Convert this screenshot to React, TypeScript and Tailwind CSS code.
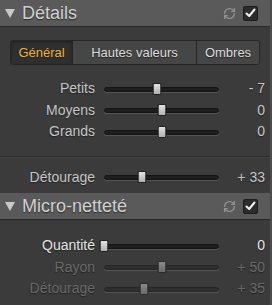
import { RefreshCw } from "lucide-react";

const FONT = { fontFamily: '"Liberation Sans", Arial, sans-serif' };

function Header({ title }: { title: string }) {
  return (
    <div className="flex h-[27px] items-center border-b border-[#262626] bg-[#5a5a5a] pl-[5px] pr-[12px]">
      <span className="mr-[7px] mt-[1px] h-0 w-0 border-x-[5px] border-t-[9px] border-x-transparent border-t-[#c9c9c9]" />
      <span className="text-[18px] leading-none text-[#d2d2d2] [text-shadow:0_1px_1px_#2a2a2a]">{title}</span>
      <div className="ml-auto flex items-center gap-[7px]">
        <RefreshCw className="h-[13px] w-[13px] text-[#909090]" strokeWidth={2.6} />
        <div className="flex h-[15px] w-[15px] items-center justify-center rounded-[2px] border border-[#1c1c1c] bg-[#2c2c2c]">
          <svg width="11" height="10" viewBox="0 0 11 10">
            <path d="M1.5 5.5 L4.2 8 L9.5 1.5" fill="none" stroke="#f2f2f2" strokeWidth="2" strokeLinecap="round" strokeLinejoin="round" />
          </svg>
        </div>
      </div>
    </div>
  );
}

function Slider({
  label,
  value,
  pos,
  disabled,
  bright,
}: {
  label: string;
  value: string;
  pos: number;
  disabled?: boolean;
  bright?: boolean;
}) {
  const text = disabled ? "text-[#6a6a6a]" : bright ? "text-[#e4e4e4]" : "text-[#c6c6c6]";
  return (
    <div className="flex h-[21.5px] items-center">
      <span className={`w-[95px] text-right text-[14px] [text-shadow:0_1px_1px_#222] ${text}`}>{label}</span>
      <div className="relative ml-[9px] h-[12px] w-[115px]">
        <div
          className={`absolute left-0 right-0 top-[4px] h-[5px] rounded-full border ${
            disabled ? "border-[#262626] bg-[#2e2e2e]" : "border-[#141414] bg-[#1e1e1e]"
          } shadow-[0_1px_0_#555]`}
        />
        <div
          className={`absolute top-0 h-[12px] w-[9px] -translate-x-1/2 rounded-[2px] border ${
            disabled
              ? "border-[#2a2a2a] bg-gradient-to-b from-[#8a8a8a] to-[#6a6a6a]"
              : "border-[#1e1e1e] bg-gradient-to-b from-[#e2e2e2] to-[#b0b0b0]"
          }`}
          style={{ left: `${pos}%` }}
        />
      </div>
      <span className={`ml-auto pr-[5px] text-[14px] [text-shadow:0_1px_1px_#222] ${text}`}>{value}</span>
    </div>
  );
}

export default function App() {
  return (
    <div className="h-[305px] w-[272px] overflow-hidden border-r-[2px] border-[#4c4c4c] bg-[#3b3b3b]" style={FONT}>
      <Header title="Détails" />
      <div className="px-[10px] pt-[13px]">
        <div className="flex h-[25px] overflow-hidden rounded-[3px] border border-[#262626] text-[13px] [text-shadow:0_1px_1px_#222]">
          <div className="flex w-[61px] items-center justify-center bg-[#2f2f2f] text-[#f2b32a] shadow-[inset_0_1px_2px_#1e1e1e]">
            Général
          </div>
          <div className="flex w-[124px] items-center justify-center border-l border-[#262626] bg-[#464646] text-[#dcdcdc]">
            Hautes valeurs
          </div>
          <div className="flex flex-1 items-center justify-center border-l border-[#262626] bg-[#464646] text-[#dcdcdc]">
            Ombres
          </div>
        </div>
      </div>
      <div className="mt-[13px]">
        <Slider label="Petits" value="- 7" pos={46.5} />
        <Slider label="Moyens" value="0" pos={50} />
        <Slider label="Grands" value="0" pos={50} />
      </div>
      <div className="mt-[13px] border-t border-[#2a2a2a] shadow-[0_1px_0_#444]" />
      <div className="mt-[10px] mb-[5px]">
        <Slider label="Détourage" value="+ 33" pos={33} />
      </div>
      <Header title="Micro-netteté" />
      <div className="mt-[15px]">
        <Slider label="Quantité" value="0" pos={0} bright />
        <Slider label="Rayon" value="+ 50" pos={50} disabled />
        <Slider label="Détourage" value="+ 35" pos={35} disabled />
      </div>
    </div>
  );
}
